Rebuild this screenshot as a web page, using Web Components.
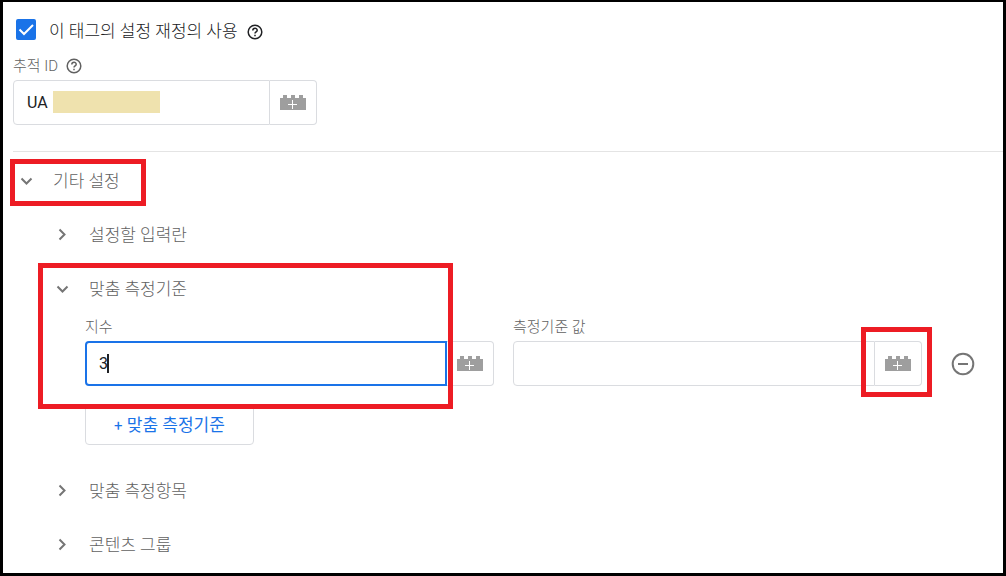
<!DOCTYPE html>
<html lang="ko">
<head>
<meta charset="utf-8">
<meta name="viewport" content="width=device-width, initial-scale=1">
<title>태그 설정</title>
<style>
body { margin: 0; background: #fff; font-family: Roboto, "Noto Sans CJK KR", sans-serif; font-weight: 300; }
</style>
</head>
<body>
<settings-page></settings-page>

<template id="t-settings-page">
<style>
:host { display: block; box-sizing: border-box; min-height: 100vh; border: 3px solid #000; border-top-width: 2px; padding: 17px 0 0 10px; color: #616161; --mark: #ed1c24; }
tag-field.tracking { width: 304px; margin-top: 14px; }
hr { margin: 26px 0 2px; border: 0; border-top: 1px solid #e4e4e4; }
.fields { display: flex; }
.pair { flex: 1; display: grid; grid-template-columns: 1fr 1fr; gap: 19px; min-width: 0; }
.remove { width: 81px; height: 45px; margin-top: 25px; padding: 0; border: 0; background: none; display: grid; place-items: center; }
.add { position: relative; display: block; box-sizing: border-box; width: 169px; height: 40px; margin: 19px 0 19px; border: 1px solid #dadce0; border-radius: 4px; background: #fff; color: #1a73e8; font: inherit; font-weight: 400; font-size: 17px; padding: 0 0 4px; }
.add .plus { font-size: 15px; }
</style>
<override-check></override-check>
<tag-field class="tracking" label="추적 ID" value="UA" help redacted></tag-field>
<hr>
<fold-section heading="기타 설정" open marked>
  <fold-section heading="설정할 입력란"></fold-section>
  <fold-section heading="맞춤 측정기준" open>
    <div class="fields">
      <div class="pair">
        <tag-field label="지수" value="3" active></tag-field>
        <tag-field label="측정기준 값" value="" marked></tag-field>
      </div>
      <button class="remove" type="button" aria-label="삭제">
        <svg width="24" height="24" viewBox="0 0 24 24" fill="none" stroke="#757575" stroke-width="2"><circle cx="12" cy="12" r="10.3"/><path d="M7 12h10"/></svg>
      </button>
    </div>
    <button class="add" type="button"><span class="plus">+</span> 맞춤 측정기준</button>
  </fold-section>
  <fold-section heading="맞춤 측정항목"></fold-section>
  <fold-section heading="콘텐츠 그룹"></fold-section>
</fold-section>
</template>

<template id="t-help-icon">
<style>
:host { display: inline-block; width: 16px; height: 16px; }
svg { display: block; }
</style>
<svg width="16" height="16" viewBox="0 0 16 16" fill="none" stroke="currentColor" stroke-width="1.5"><circle cx="8" cy="8" r="6.8"/><path d="M5.8 6.5C5.8 3.5 10.2 3.5 10.2 6.3C10.2 7.9 8 7.9 8 9.6"/><path d="M8 10.7v1.5"/></svg>
</template>

<template id="t-override-check">
<style>
:host { display: flex; align-items: flex-start; height: 22px; color: #202124; font-size: 17px; }
.box { display: grid; margin: 0 13px 0 3px; }
input, .box svg { grid-area: 1 / 1; }
input { appearance: none; width: 20px; height: 21px; margin: 0; border-radius: 2px; border: 2px solid #757575; }
input:checked { background: #1a73e8; border-color: #1a73e8; }
.box svg { pointer-events: none; }
input:not(:checked) + svg { visibility: hidden; }
label { line-height: 24px; margin-right: 9px; white-space: nowrap; }
help-icon { margin-top: 5px; }
</style>
<span class="box"><input id="override" type="checkbox" checked><svg width="20" height="20" viewBox="0 0 20 20" fill="none" stroke="#fff" stroke-width="2"><path d="M3.5 10.5l4.5 4.5L17 6"/></svg></span>
<label for="override">이 태그의 설정 재정의 사용</label><help-icon></help-icon>
</template>

<template id="t-tag-field">
<style>
:host { display: block; position: relative; min-width: 0; }
.caption { display: flex; align-items: center; gap: 8px; height: 22px; margin-bottom: 3px; font-size: 15px; line-height: 22px; }
:host(:not([help])) help-icon { display: none; }
.control { display: flex; height: 45px; }
.entry { position: relative; flex: 1; min-width: 0; }
input { box-sizing: border-box; width: 100%; height: 100%; margin: 0; padding: 0 13px; border: 1px solid #dadce0; border-radius: 4px 0 0 4px; background: #fff; color: #202124; font: inherit; font-weight: 400; font-size: 16px; outline: none; }
button { position: relative; box-sizing: border-box; width: 47px; padding: 0; border: 1px solid #dadce0; border-left: 0; border-radius: 0 4px 4px 0; background: #fff; display: grid; place-items: center; }
.caret, .redaction { display: none; position: absolute; }
:host([redacted]) .redaction { display: block; left: 40px; top: 11px; width: 107px; height: 22px; background: #efe2ae; }
:host([active]) input { border: 2px solid #1a73e8; padding: 0 12px; }
:host([active]) .caret { display: block; left: 22px; top: 13px; width: 2px; height: 19px; background: #202124; }
:host([active])::after { content: ""; position: absolute; z-index: 2; inset: -53px 41px -23px -47px; border: 5px solid var(--mark); pointer-events: none; }
:host([marked]) button::after { content: ""; position: absolute; z-index: 2; inset: -15px -11px -12px -14px; border: 5px solid var(--mark); pointer-events: none; }
</style>
<div class="caption"><label for="entry"></label><help-icon></help-icon></div>
<div class="control">
  <div class="entry"><input id="entry" type="text"><span class="redaction"></span><span class="caret"></span></div>
  <button type="button" aria-label="변수 선택"><svg width="26" height="15" viewBox="0 0 26 15" shape-rendering="crispEdges"><path fill="#9e9e9e" d="M0 3h3V0h4v3h4V0h4v3h4V0h4v3h3v12H0z"/><path fill="#fff" d="M12 5h1v4h4v1h-4v4h-1v-4H8V9h4z"/></svg></button>
</div>
</template>

<template id="t-fold-section">
<style>
:host { display: block; }
button { position: relative; display: flex; align-items: center; gap: 14px; width: fit-content; height: 54px; padding: 0; border: 0; background: none; color: inherit; font: inherit; font-size: 17px; line-height: 24px; white-space: nowrap; }
:host([open]) svg { transform: rotate(90deg); }
.body { padding-left: 36px; }
:host(:not([open])) .body { display: none; }
:host([marked]) button::after { content: ""; position: absolute; inset: 5px -26px 2px -3px; border: 5px solid var(--mark); pointer-events: none; }
</style>
<button type="button"><svg width="26" height="26" viewBox="0 0 26 26" fill="none" stroke="#757575" stroke-width="2"><path d="M10.5 7.5l5 5-5 5"/></svg><span></span></button>
<div class="body"><slot></slot></div>
</template>

<script>
class BaseElement extends HTMLElement {
  constructor() {
    super();
    const tpl = document.getElementById('t-' + this.localName);
    this.attachShadow({ mode: 'open' }).append(document.importNode(tpl.content, true));
  }
}
class HelpIcon extends BaseElement {}
class OverrideCheck extends BaseElement {}
class TagField extends BaseElement {
  connectedCallback() {
    this.shadowRoot.querySelector('label').textContent = this.getAttribute('label');
    this.shadowRoot.querySelector('input').value = this.getAttribute('value') || '';
  }
}
class FoldSection extends BaseElement {
  connectedCallback() {
    const button = this.shadowRoot.querySelector('button');
    button.querySelector('span').textContent = this.getAttribute('heading');
    button.setAttribute('aria-expanded', this.hasAttribute('open'));
    button.onclick = () => button.setAttribute('aria-expanded', this.toggleAttribute('open'));
  }
}
class SettingsPage extends BaseElement {}
customElements.define('help-icon', HelpIcon);
customElements.define('override-check', OverrideCheck);
customElements.define('tag-field', TagField);
customElements.define('fold-section', FoldSection);
customElements.define('settings-page', SettingsPage);
</script>
</body>
</html>
